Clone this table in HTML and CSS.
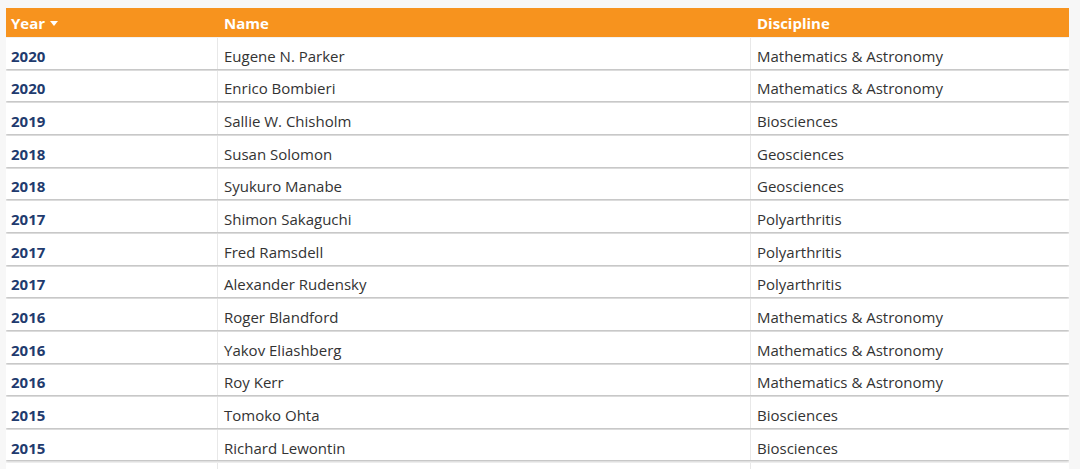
FILE: index.html
```html
<!DOCTYPE html>
<html lang="en">
<head>
<meta charset="utf-8">
<title>Laureates</title>
<link rel="stylesheet" href="styles.css">
</head>
<body>
<div class="table">
  <div class="head">
    <div class="hcell">Year <span class="caret"></span></div>
    <div class="hcell">Name</div>
    <div class="hcell">Discipline</div>
  </div>
  <div class="row"><div class="cell year">2020</div><div class="cell">Eugene N. Parker</div><div class="cell">Mathematics &amp; Astronomy</div></div>
  <div class="row"><div class="cell year">2020</div><div class="cell">Enrico Bombieri</div><div class="cell">Mathematics &amp; Astronomy</div></div>
  <div class="row"><div class="cell year">2019</div><div class="cell">Sallie W. Chisholm</div><div class="cell">Biosciences</div></div>
  <div class="row"><div class="cell year">2018</div><div class="cell">Susan Solomon</div><div class="cell">Geosciences</div></div>
  <div class="row"><div class="cell year">2018</div><div class="cell">Syukuro Manabe</div><div class="cell">Geosciences</div></div>
  <div class="row"><div class="cell year">2017</div><div class="cell">Shimon Sakaguchi</div><div class="cell">Polyarthritis</div></div>
  <div class="row"><div class="cell year">2017</div><div class="cell">Fred Ramsdell</div><div class="cell">Polyarthritis</div></div>
  <div class="row"><div class="cell year">2017</div><div class="cell">Alexander Rudensky</div><div class="cell">Polyarthritis</div></div>
  <div class="row"><div class="cell year">2016</div><div class="cell">Roger Blandford</div><div class="cell">Mathematics &amp; Astronomy</div></div>
  <div class="row"><div class="cell year">2016</div><div class="cell">Yakov Eliashberg</div><div class="cell">Mathematics &amp; Astronomy</div></div>
  <div class="row"><div class="cell year">2016</div><div class="cell">Roy Kerr</div><div class="cell">Mathematics &amp; Astronomy</div></div>
  <div class="row"><div class="cell year">2015</div><div class="cell">Tomoko Ohta</div><div class="cell">Biosciences</div></div>
  <div class="row"><div class="cell year">2015</div><div class="cell">Richard Lewontin</div><div class="cell">Biosciences</div></div>
  <div class="row"><div class="cell year"></div><div class="cell"></div><div class="cell"></div></div>
</div>
</body>
</html>
```
FILE: styles.css
```css
html, body {
  background: #f7f7f7;
}
body {
  margin: 8px 11px 0 6px;
  font-family: "Open Sans", "Noto Sans", sans-serif;
  font-size: 15px;
  color: #333;
  overflow: hidden;
}
.table {
  width: 1063px;
}
.head, .row {
  display: grid;
  grid-template-columns: 211px 533px 1fr;
}
.head {
  background: #f7931e;
  height: 29px;
  color: #fff;
  font-weight: 700;
}
.hcell {
  display: flex;
  align-items: center;
  padding-left: 5px;
  padding-top: 1px;
}
.hcell + .hcell {
  padding-left: 7px;
}
.caret {
  width: 0;
  height: 0;
  margin-left: 5px;
  border-left: 4.5px solid transparent;
  border-right: 4.5px solid transparent;
  border-top: 5px solid #fff;
}
.row {
  height: 30.6px;
  margin-top: 2.07px;
  background: #fff;
  box-shadow: 0 1px 2px rgba(0, 0, 0, 0.28);
}
.head + .row {
  margin-top: 1px;
}
.cell {
  display: flex;
  align-items: center;
  padding-left: 5px;
  padding-top: 5px;
}
.cell + .cell {
  border-left: 1px solid #e8e8e8;
  padding-left: 6px;
}
.year {
  color: #1f3b6e;
  font-weight: 700;
}
```
